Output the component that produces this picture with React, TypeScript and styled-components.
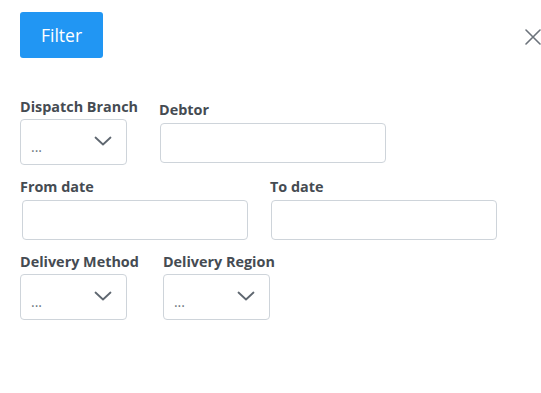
import React from 'react';
import styled, { createGlobalStyle } from 'styled-components';

const GlobalStyle = createGlobalStyle`
  html, body {
    margin: 0;
    padding: 0;
    background: #ffffff;
    font-family: 'Open Sans', 'Noto Sans', sans-serif;
  }
`

const Panel = styled.div`
  width: 541px;
  height: 393px;
  box-sizing: border-box;
  padding: 12px 0 0 20px;
  position: relative;
`

const Header = styled.div`
  display: flex;
  align-items: flex-start;
  margin-bottom: 40px;
`

const FilterButton = styled.button`
  width: 83px;
  height: 46px;
  border: none;
  border-radius: 3px;
  background-color: #2196f3;
  color: #ffffff;
  font-family: 'Open Sans', sans-serif;
  font-size: 17.5px;
  cursor: pointer;
`

const CloseButton = styled.button`
  position: absolute;
  top: 29px;
  right: 0;
  width: 17px;
  height: 17px;
  padding: 0;
  border: none;
  background: transparent;
  cursor: pointer;
`

const Row = styled.div<{ gap: number }>`
  display: flex;
  align-items: flex-start;
  gap: ${({ gap }) => gap}px;
  margin-bottom: 13px;
`

const Field = styled.div<{ offset?: number; shift?: number }>`
  display: flex;
  flex-direction: column;
  padding-top: ${({ offset }) => offset || 0}px;

  > input {
    margin-left: ${({ shift }) => shift || 0}px;
  }
`

const Label = styled.label<{ space?: number }>`
  font-size: 14.4px;
  font-weight: 700;
  line-height: 18px;
  color: #454b52;
  margin-bottom: ${({ space }) => space ?? 4}px;
  white-space: nowrap;
`

const TextInput = styled.input`
  width: 226px;
  height: 40px;
  box-sizing: border-box;
  border: 1px solid #ced4da;
  border-radius: 4px;
  background: #ffffff;
  outline: none;
`

const SelectBox = styled.div`
  width: 107px;
  height: 46px;
  box-sizing: border-box;
  border: 1px solid #ced4da;
  border-radius: 4px;
  display: flex;
  align-items: center;
  justify-content: space-between;
  padding: 0 14px 0 10px;
  color: #6c757d;
  font-size: 14px;
`

const Placeholder = styled.span`
  padding-top: 8px;
`

const Chevron = () => (
  <svg width="18" height="10" viewBox="0 0 18 10" fill="none" style={{ marginTop: -2 }}>
    <path d="M1.5 1.5 L9 8.5 L16.5 1.5" stroke="#5f6770" strokeWidth="1.8" strokeLinecap="round" strokeLinejoin="round" />
  </svg>
)

function Select(props: { label: string }) {
  return <Field>
    <Label space={3}>{props.label}</Label>
    <SelectBox>
      <Placeholder>...</Placeholder>
      <Chevron />
    </SelectBox>
  </Field>
}

export default function App() {
  return <>
    <GlobalStyle />
    <Panel>
      <Header>
        <FilterButton>Filter</FilterButton>
        <CloseButton aria-label="close">
          <svg width="16" height="16" viewBox="0 0 16 16">
            <path d="M1 1 L15 15 M15 1 L1 15" stroke="#6c737b" strokeWidth="1.6" strokeLinecap="round" />
          </svg>
        </CloseButton>
      </Header>

      <Row gap={21}>
        <Select label="Dispatch Branch" />
        <Field offset={3} shift={1}>
          <Label>Debtor</Label>
          <TextInput />
        </Field>
      </Row>

      <Row gap={22}>
        <Field shift={2}>
          <Label>From date</Label>
          <TextInput />
        </Field>
        <Field shift={1}>
          <Label>To date</Label>
          <TextInput />
        </Field>
      </Row>

      <Row gap={24}>
        <Select label="Delivery Method" />
        <Select label="Delivery Region" />
      </Row>
    </Panel>
  </>
}
